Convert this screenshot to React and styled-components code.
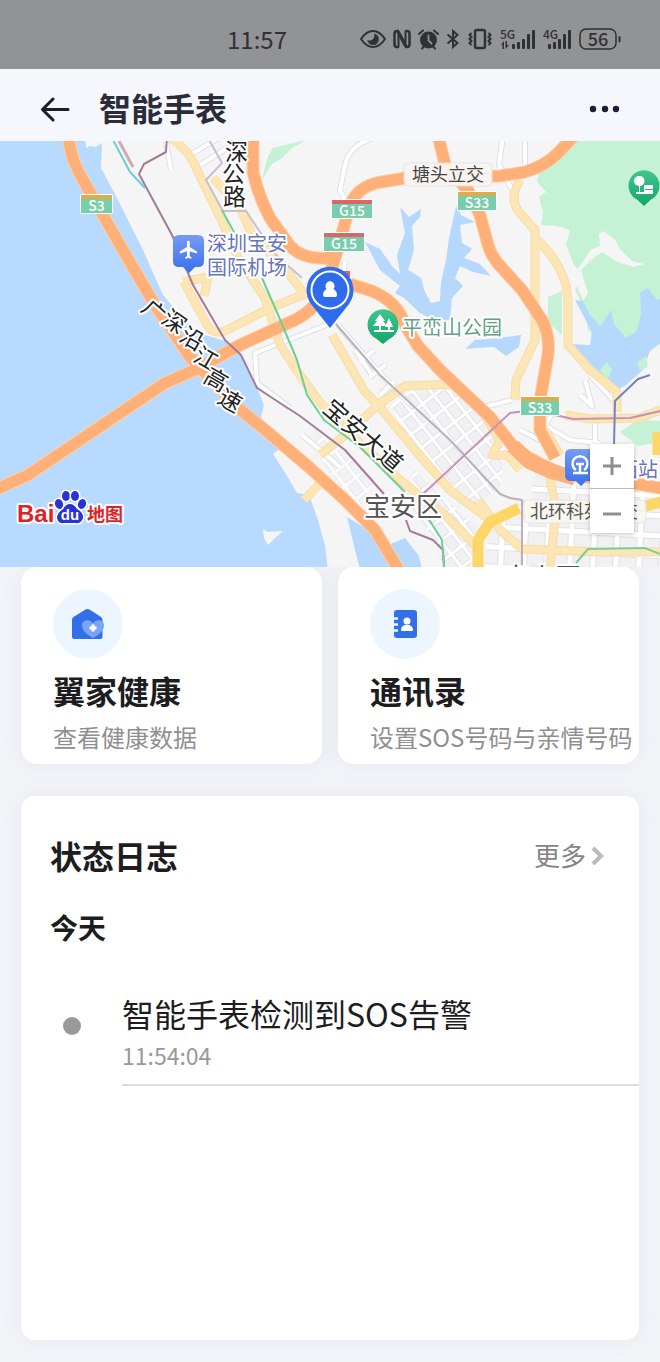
import React, { useState } from "react";
import styled, { createGlobalStyle } from "styled-components";

const GlobalStyle = createGlobalStyle`
  * {
    box-sizing: border-box;
  }

  body {
    margin: 0;
    background-color: #f2f4f8;
    font-family: "Noto Sans CJK SC", sans-serif;
    color: #1d1d1f;
  }
`;

const Page = styled.div`
  display: flex;
  flex-direction: column;
  min-height: 100vh;
  padding-bottom: 22px;
`;

const StatusBar = styled.div`
  display: flex;
  align-items: center;
  justify-content: flex-end;
  height: 69px;
  padding: 9px 39px 0 0;
  background-color: #929395;
  color: #303134;
`;

const Clock = styled.span`
  margin-right: 73px;
  font-size: 24px;
  line-height: 32px;
`;

const StatusIcons = styled.div`
  display: flex;
  align-items: center;
  gap: 7px;

  svg {
    display: block;
    overflow: visible;
  }
`;

const Header = styled.header`
  display: flex;
  align-items: center;
  height: 72px;
  padding: 7px 38px 0 40px;
  background-color: #f5f7fc;
`;

const IconButton = styled.button`
  display: flex;
  padding: 0;
  border: none;
  background: none;
  cursor: pointer;
`;

const Title = styled.h1`
  flex: 1;
  margin: 0 0 0 29px;
  padding-bottom: 4px;
  font-size: 32px;
  line-height: 48px;
  font-weight: 700;
  color: #2b2c3a;
`;

const MapBox = styled.section`
  position: relative;
  height: 426px;
  overflow: hidden;
  background-color: #f5f5f5;
`;

const MapSvg = styled.svg`
  display: block;
  width: 100%;
  height: 100%;
`;

const MapText = styled.text`
  font-size: ${(props) => props.$size || 20}px;
  font-weight: ${(props) => props.$weight || 400};
  fill: ${(props) => props.$color || "#222"};
  stroke: #fff;
  stroke-width: ${(props) => (props.$plain ? 0 : 4)}px;
  stroke-linejoin: round;
  paint-order: stroke;
`;

const ZoomControl = styled.div`
  position: absolute;
  right: 26px;
  bottom: 34px;
  display: flex;
  flex-direction: column;
  background-color: #fff;
  box-shadow: 0 1px 4px rgba(0, 0, 0, 0.25);
`;

const ZoomButton = styled(IconButton)`
  align-items: center;
  justify-content: center;
  width: 44px;
  height: 44px;

  & + & {
    height: 45px;
    border-top: 1px solid #bbb;
  }
`;

const Cards = styled.div`
  display: grid;
  grid-template-columns: 1fr 1fr;
  gap: 16px;
  padding: 0 21px;
  margin-bottom: 32px;
`;

const Card = styled.a`
  display: block;
  padding: 22px 4px 10px 32px;
  border-radius: 16px;
  background-color: #fff;
  box-shadow: 0 0 24px rgba(90, 95, 120, 0.08);
  color: inherit;
  text-decoration: none;
`;

const CardIcon = styled.div`
  display: flex;
  align-items: center;
  justify-content: center;
  width: 70px;
  height: 70px;
  border-radius: 50%;
  background-color: #edf6ff;
`;

const CardTitle = styled.h2`
  margin: 8px 0 6px;
  font-size: 32px;
  line-height: 46px;
  font-weight: 700;
`;

const CardText = styled.p`
  margin: 0;
  font-size: 24px;
  line-height: 35px;
  color: #8f8f8f;
  white-space: nowrap;
`;

const LogPanel = styled.section`
  flex: 1;
  margin: 0 21px;
  padding-top: 35px;
  border-radius: 14px;
  background-color: #fff;
  box-shadow: 0 0 24px rgba(90, 95, 120, 0.08);
`;

const LogHead = styled.div`
  display: flex;
  align-items: center;
  justify-content: space-between;
  padding: 0 34px 0 29px;
`;

const LogTitle = styled.h2`
  margin: 0;
  font-size: 32px;
  line-height: 48px;
  font-weight: 700;
`;

const MoreLink = styled.a`
  display: flex;
  align-items: center;
  gap: 5px;
  font-size: 26px;
  line-height: 40px;
  color: #858585;
  text-decoration: none;
`;

const DayTitle = styled.h3`
  margin: 28px 0 42px 29px;
  font-size: 28px;
  line-height: 40px;
  font-weight: 700;
`;

const LogList = styled.ul`
  margin: 0;
  padding: 0 0 0 42px;
  list-style: none;
`;

const LogItem = styled.li`
  display: flex;
  gap: 41px;
`;

const Dot = styled.span`
  flex: none;
  width: 18px;
  height: 18px;
  margin-top: 28px;
  border-radius: 50%;
  background-color: #999;
`;

const LogBody = styled.div`
  flex: 1;
  padding-bottom: 11px;
  border-bottom: 2px solid #dcdcdc;
`;

const LogText = styled.p`
  margin: 0;
  font-size: 32px;
  line-height: 48px;
`;

const LogTime = styled.time`
  display: block;
  font-size: 23px;
  line-height: 36px;
  color: #999;
`;

const EyeIcon = () => (
  <svg width="26" height="20" viewBox="0 0 26 20" fill="none" stroke="currentColor" strokeWidth="2">
    <path d="M1 10C5 4 9 2 13 2s8 2 12 8c-4 6-8 8-12 8S5 16 1 10Z" />
    <path d="M14 4.500a5.800 5.800 0 1 1-6.700 6.500c2.200 1 4.200.5 5.700-1s1.700-3.500 1-5.500Z" fill="currentColor" stroke="none" />
  </svg>
);

const NfcIcon = () => (
  <svg width="18" height="20" viewBox="0 0 18 20" fill="none" stroke="currentColor" strokeLinecap="round">
    <path d="M5 2H4Q1.500 2 1.500 4.500v11Q1.500 18 4 18h1M13 2h1q2.500 0 2.500 2.500v11Q16.500 18 14 18h-1" strokeWidth="2.500" />
    <path d="M5.500 17V6M12.500 3v11" strokeWidth="2" />
    <path d="M5.500 3.500L12.500 16.500" strokeWidth="3.500" />
  </svg>
);

const AlarmIcon = () => (
  <svg width="21" height="21" viewBox="0 0 21 21" fill="none" stroke="currentColor" strokeWidth="2" strokeLinecap="round">
    <circle cx="10.500" cy="11" r="7.500" fill="currentColor" />
    <path d="M1 5l4-3.500M20 5l-4-3.500M4 19.500l2-2M17 19.500l-2-2" />
    <path d="M10.500 6.500v5l3 3" stroke="#929395" strokeWidth="1.800" />
  </svg>
);

const BluetoothIcon = () => (
  <svg width="14" height="20" viewBox="0 0 14 20" fill="none" stroke="currentColor" strokeWidth="2">
    <path d="M1.500 5.500L11.500 14 7 18V2l4.500 4L1.500 14.500" />
  </svg>
);

const VibrateIcon = () => (
  <svg width="26" height="20" viewBox="0 0 26 20" fill="none" stroke="currentColor" strokeWidth="2">
    <rect x="8" y="1" width="10" height="18" rx="2" strokeWidth="2.500" />
    <path d="M4.500 4l-2 2 2 2-2 2 2 2-2 2 2 2M21.500 4l2 2-2 2 2 2-2 2 2 2-2 2" />
  </svg>
);

const SignalIcon = ({ label, arrows }) => {
  const start = arrows ? 12 : 5;
  return (
    <svg width={arrows ? 36 : 29} height="22" viewBox={`0 0 ${arrows ? 36 : 29} 22`} fill="currentColor">
      <text x="0" y="11" fontSize="12" fontWeight="500">{label}</text>
      {[5, 7, 10, 15, 19].map((h, i) => (
        <rect key={h} x={start + i * 5} y={21 - h} width="3" height={h} rx="1" />
      ))}
      {arrows && <path d="M1 17l3-4v8H2.500v-4zM5.500 13H7v4h2l-3.500 4z" />}
    </svg>
  );
};

const BatteryIcon = () => (
  <svg width="42" height="22" viewBox="0 0 42 22" fill="none" stroke="currentColor">
    <rect x="1" y="1" width="36" height="20" rx="6" strokeWidth="1.500" />
    <path d="M40.500 9v4.500" strokeWidth="2" strokeLinecap="round" />
    <text x="19" y="17.500" fontSize="18" fontWeight="500" textAnchor="middle" fill="currentColor" stroke="none">56</text>
  </svg>
);

const HomeHealthIcon = () => (
  <svg width="34" height="32" viewBox="0 0 34 32">
    <path d="M1 12q0-2 1.500-3L14.500 1.500q2-1 4 0L30 9q1.500 1 1.500 3v17q0 2-2 2H3q-2 0-2-2Z" fill="#3370e8" />
    <path d="M22 30c-7-4-11-8-11-12.500 0-6 8-7 11-2 3-5 11-4 11 2C33 22 29 26 22 30Z" fill="#78a4f6" />
    <path d="M22 16.500v7M18.500 20h7" stroke="#fff" strokeWidth="3" />
  </svg>
);

const ContactsIcon = () => (
  <svg width="26" height="30" viewBox="0 0 26 30">
    <rect x="2" y="1" width="23" height="28" rx="3" fill="#3370e8" />
    <path d="M0 9.500h6M0 15.500h6M0 21.500h6" stroke="#edf6ff" strokeWidth="2.500" />
    <circle cx="15" cy="12" r="3.500" fill="#fff" />
    <path d="M9 21c0-7 12-7 12 0q0 1-1 1H10q-1 0-1-1Z" fill="#fff" />
  </svg>
);

const shields = [
  { x: 81, y: 195, name: "S3", w: 31, top: "#dcae49" },
  { x: 332, y: 200, name: "G15", w: 40, top: "#d9666a" },
  { x: 324, y: 233, name: "G15", w: 40, top: "#d9666a" },
  { x: 458, y: 192, name: "S33", w: 38, top: "#dcae49" },
  { x: 521, y: 397, name: "S33", w: 38, top: "#dcae49" },
];

const highways = [
  "M68 136Q71 160 83 180L120 245 155 305 190 357 237 407 270 434 310 468 345 500 375 530 400 572",
  "M-5 490L28 475 165 383 195 370 240 345 295 320Q318 308 326 286L336 255 350 205Q357 188 376 183L405 178 500 176 525 172Q545 166 558 153L575 135",
  "M253 136V172Q258 195 270 218L290 246Q305 262 335 257M350 284L372 291Q398 302 405 325L418 346 440 370 490 417 516 450Q540 465 565 475L610 479 665 489",
  "M438 136L446 168 468 190 480 215 488 245Q492 258 502 268L522 290 542 320Q550 335 548 355L540 400V430L555 458",
];

const mainRoads = [
  "M168 136Q190 150 198 172L220 217 238 258 265 298 280 345 300 375 318 400 347 431 400 480 445 515 480 550",
  "M213 178L240 207 252 235 282 265 306 296",
  "M183 282L208 277 204 296M184 282L207 325Q213 335 225 331L270 308 315 290",
  "M332 335L365 392 378 405 415 450 450 490 490 520",
  "M378 405L345 435 320 455M378 405L405 386 455 384",
  "M520 180Q508 200 520 213L535 230V340L516 380 515 400M535 238Q558 258 566 285L568 300V345L590 370 617 392V412",
  "M565 415L590 419 640 418 665 408",
  "M480 408L500 440 492 455 508 455 520 470M545 430L560 455M478 500L500 530 522 549 600 552 665 552",
  "M550 478L556 510 550 567M304 500L325 478",
];

const whiteRoads = [
  "M165 136L171 170M190 155L222 136M200 165L235 143M243 136L248 155",
  "M503 136L499 165 515 195M525 136V165M382 136Q350 142 345 165L340 190 345 200M345 262L340 290",
  "M329 324L255 353 257 383 290 408M302 435L320 450 340 467",
  "M338 325L375 368 410 404M355 350L372 375M370 377L385 365M360 362L374 350M380 395L394 382",
  "M585 380L592 406 580 395M590 375L615 402M556 408L545 425 570 440 600 443M595 420V450M480 408L512 400M520 430L550 445",
];

const lakes = [
  "M365 242L380 249 392 266 400 274 397 255 405 233 400 207 409 217 421 209 420 217 412 226 414 250 408 270 421 278 425 292 431 303 440 301 441 282 446 260 449 238 453 220 456 206 461 215 475 222 460 225 462 243 472 249 464 258 480 264 491 276 473 272 460 266 455 278 463 286 452 298 450 320 440 323 420 313 404 298 395 293 400 286 380 270Z",
  "M465 349L475 340 500 338 521 335 519 347 506 356 494 347 477 348Z",
  "M575 300L583 301 590 315 600 326 611 310 614 324 626 338 636 332 641 315 640 292 648 288 657 300 665 296V340L650 350 644 369 625 386 615 390 607 382 597 370 580 355 569 344 590 345 592 332Z",
  "M347 517L372 532 388 545 405 538 419 556 422 570H360Z",
];

const parks = [
  "M573 136L560 152 540 166 537 182 546 192 539 197 543 212 541 225 557 226 570 230 566 245 574 265 583 275 575 290 585 310 588 330 610 350 640 360 665 340V136Z",
  "M548 297L562 291V335L548 323Z",
  "M262 179L268 156 273 148 306 140 292 148 282 158 272 164Z",
  "M620 432L637 420 665 421V441L638 446Z",
];

const Shield = ({ x, y, name, w, top }) => (
  <g>
    <rect x={x - 1} y={y - 1} width={w + 2} height="20" rx="2" fill="#fff" />
    <path d={`M${x} ${y}h${w}v18h-${w}z`} fill="#78cdac" />
    <path d={`M${x} ${y}h${w}v4h-${w}z`} fill={top} />
    <MapText x={x + w / 2} y={y + 16} textAnchor="middle" $size={14} $weight={500} $color="#fff" $plain>
      {name}
    </MapText>
  </g>
);

const MapView = () => (
  <MapSvg viewBox="0 141 660 426" preserveAspectRatio="xMidYMid slice" role="img" aria-label="地图">
    <defs>
      <pattern id="blocks" width="14" height="17" patternUnits="userSpaceOnUse" patternTransform="rotate(-38)">
        <rect width="14" height="17" fill="#fff" />
        <rect x="2" y="2" width="11" height="14" fill="#e2e3e8" />
        <rect x="3" y="3" width="9" height="12" fill="#f1f1f4" />
      </pattern>
      <pattern id="blocksStraight" width="23" height="20" patternUnits="userSpaceOnUse" patternTransform="rotate(3)">
        <rect width="23" height="20" fill="#fff" />
        <rect x="3" y="3" width="18" height="15" fill="#e0e1e6" />
        <rect x="4" y="4" width="16" height="13" fill="#f1f1f4" />
      </pattern>
      <linearGradient id="bluePin" x1="0" y1="0" x2="0" y2="1">
        <stop offset="0" stopColor="#779bf5" />
        <stop offset="1" stopColor="#396eed" />
      </linearGradient>
      <linearGradient id="greenPin" x1="0" y1="0" x2="0" y2="1">
        <stop offset="0" stopColor="#40c68d" />
        <stop offset="1" stopColor="#13a66b" />
      </linearGradient>
    </defs>

    <rect y="141" width="660" height="426" fill="#f5f5f6" />
    <path
      d="M-5 136H85L86 148 90 146 96 147 102 143 101 168 118 200 143 250 163 295 183 319 202 334 225 341 241 355 257 388 264 405 261 417 281 448 273 454 286 474 297 493 309 495 317 517 325 545 328 572H-5Z"
      fill="#b9daff"
    />
    <path d="M263 529L267 532 283 531 276 537 268 545 264 538Z" fill="#f5f5f6" />
    {parks.map((d) => <path key={d} d={d} fill="#c5f1d5" />)}
    <path d="M575 281L577 270 591 250 600 246 599 234 604 231 615 240 620 249 632 261 644 264 634 267 618 262 602 252 591 260 581 270 588 293 583 301Z" fill="#f5f5f6" />
    {lakes.map((d) => <path key={d} d={d} fill="#b6d8fd" />)}
    <path d="M600 370L607 362 612 370 607 381ZM637 362L646 356 648 367 640 370Z" fill="#c5f1d5" />

    <path d="M390 405L415 388 448 390 476 408 488 425 504 450 500 490 470 505 440 480 410 440Z" fill="url(#blocks)" />
    <path d="M415 470L440 495 480 530 470 567 443 567 432 535 405 500Z" fill="url(#blocks)" />
    <path d="M305 437L318 428 350 457 375 480 360 510 335 480Z" fill="url(#blocks)" opacity="0.7" />
    <path d="M490 520L520 500 660 500V567H485Z" fill="url(#blocksStraight)" />
    <path d="M535 465L590 475 620 480 660 490V505H530Z" fill="url(#blocksStraight)" />

    <g fill="none" strokeLinejoin="round">
      {whiteRoads.map((d) => <path key={d} d={d} stroke="#dfe0e5" strokeWidth="6" />)}
      {whiteRoads.map((d) => <path key={d} d={d} stroke="#fff" strokeWidth="4" />)}
      {mainRoads.map((d) => <path key={d} d={d} stroke="#f8dca5" strokeWidth="9" />)}
      {mainRoads.map((d) => <path key={d} d={d} stroke="#fde6b6" strokeWidth="7" />)}
      <path d="M478 567V540L490 522 519 508M638 508L665 501M658 432V455" stroke="#fcd768" strokeWidth="11" />
      {highways.map((d) => <path key={d} d={d} stroke="#fdcfa6" strokeWidth="13" />)}
      {highways.map((d) => <path key={d} d={d} stroke="#feb078" strokeWidth="11" />)}
      <path d="M513 446L530 462 550 471 575 478" stroke="#feb078" strokeWidth="15" />

      <path d="M167 136L166 152 144 164 139 174 172 235 193 285 225 340 241 355 257 388 300 416 345 450 384 494M406 520L410 531 433 540 443 550 444 567" stroke="#a37d98" strokeWidth="2" />
      <path d="M111 136L130 172 145 188" stroke="#69cfd4" strokeWidth="2" />
      <path d="M119 141L133 167" stroke="#d5a9ad" strokeWidth="3" />
      <path d="M207 136L222 163 206 180 223 211 246 211 262 235 276 255 302 278" stroke="#c9bfd1" strokeWidth="2" />
      <path d="M222 210L236 236M262 278L276 310 297 360 307 395 324 420 360 447 405 492M428 518L442 540 444 567" stroke="#70ce94" strokeWidth="2" />
      <path d="M336 324L380 375 450 440 500 494 510 498 522 500V567" stroke="#b8b0bd" strokeWidth="2" />
      <path d="M423 494L510 413 525 411 555 415 573 419 630 418 665 410" stroke="#c891b7" strokeWidth="2" />
      <path d="M650 375L638 379 615 401 614 445" stroke="#7681c3" strokeWidth="2" />
      <path d="M576 563L588 549 645 548 665 556" stroke="#7ccc9a" strokeWidth="2" />
    </g>

    {shields.map((s) => <Shield key={`${s.x}-${s.y}`} {...s} />)}
    <rect x="340" y="271" width="10" height="6" fill="#d9666a" />

    <rect x="404" y="163" width="88" height="23" rx="4" fill="#faf6f4" opacity="0.95" stroke="#e6e1df" />
    <MapText x="412" y="181" $size={18} $color="#444" $plain>塘头立交</MapText>
    <rect x="524" y="500" width="122" height="23" rx="4" fill="#f8f7f1" opacity="0.95" stroke="#e6e4dc" />
    <MapText x="530" y="518" $size={18} $color="#555" $plain>北环科苑立交</MapText>

    <MapText x="225 222 223" y="160 182 205" $size={23}>深公路</MapText>
    <MapText x="140 160 178 192 202 216" y="310 322 340 360 381 402" rotate="42 35 30 30 30 30" $size={23}>广深沿江高速</MapText>
    <MapText transform="translate(363 436) rotate(41)" y="8" textAnchor="middle" $size={24}>宝安大道</MapText>
    <MapText $color="#6673bd">
      <tspan x="207" y="251">深圳宝安</tspan>
      <tspan x="207" y="275">国际机场</tspan>
    </MapText>
    <MapText x="402" y="335" $color="#62a184">平峦山公园</MapText>
    <MapText x="364" y="516" $size={26} $color="#555">宝安区</MapText>
    <MapText x="503" y="587" $size={26} $color="#555">南山区</MapText>
    <MapText x="618" y="477" $color="#6673bd">西站</MapText>

    {/* airport */}
    <path d="M179 235h19q6 0 6 6v20q0 6-6 6h-3l-6 6-6-6h-4q-6 0-6-6v-20q0-6 6-6Z" fill="url(#bluePin)" />
    <path transform="translate(178 239) scale(0.9)" d="M21 16v-2l-8-5V3.500c0-.83-.67-1.500-1.500-1.500S10 2.670 10 3.500V9l-8 5v2l8-2.500V19l-2 1.500V22l3.500-1 3.500 1v-1.500L13 19v-5.500l8 2.500z" fill="#fff" />

    {/* railway station */}
    <path d="M571 449h20q6 0 6 6v20q0 6-6 6h-5l-5 5-5-5h-5q-6 0-6-6v-20q0-6 6-6Z" fill="url(#bluePin)" />
    <path d="M576 470a7.500 7.500 0 1 1 8 0M580 457v-2M573 473h15M576 464h8M580 464v9" fill="none" stroke="#fff" strokeWidth="2.500" />

    {/* parks */}
    <path d="M376 338.500a15.500 15.500 0 1 1 14 0L383 344Z" fill="url(#greenPin)" />
    <path d="M380 314l5 7h-2l4 5h-6v4h7v-3h-3l4-9 4 9h-3v3h4v2h-20v-2h5v-4h-6l4-5h-2Z" fill="#fff" />
    <path d="M637 199.500a15.500 15.500 0 1 1 14 0L644 206Z" fill="url(#greenPin)" />
    <path d="M639 176a5 5 0 0 1 1 10v6h4v-7h9v4h-8v1h8v4h-17v-2h3v-6a5 5 0 0 1 0-10Z" fill="#fff" />

    {/* watch position */}
    <path d="M330 328L311 304A23.500 23.500 0 1 1 349 304Z" fill="#2f6bed" />
    <circle cx="330" cy="290" r="18.500" fill="none" stroke="#fff" strokeWidth="2" />
    <path d="M330 281a5 5 0 0 1 3.500 8q3.500 2 3.500 6 0 2-2 2h-10q-2 0-2-2 0-4 3.500-6a5 5 0 0 1 3.500-8Z" fill="#fff" />

    {/* Baidu logo */}
    <g stroke="#fff" strokeWidth="3" fill="#2932d8" paintOrder="stroke">
      <path d="M70 504q4 0 7 5 7 4 6 9-2 6-7 5h-12q-6 1-7-5 0-5 6-9 3-5 7-5Z" />
      <ellipse cx="59" cy="504" rx="4" ry="5" transform="rotate(-20 59 504)" />
      <ellipse cx="66" cy="496" rx="4" ry="5" />
      <ellipse cx="75" cy="496" rx="4" ry="5" />
      <ellipse cx="82" cy="504" rx="4" ry="5" transform="rotate(20 82 504)" />
    </g>
    <MapText x="17" y="522" $size={24} $weight={700} $color="#dc2328" fontFamily="Liberation Sans, sans-serif">Bai</MapText>
    <MapText x="70" y="520" textAnchor="middle" $size={15} $weight={700} $color="#fff" $plain fontFamily="Liberation Sans, sans-serif">du</MapText>
    <MapText x="87" y="521" $size={18} $weight={700} $color="#dc2328">地图</MapText>
  </MapSvg>
);

const entries = [
  { icon: <HomeHealthIcon />, title: "翼家健康", text: "查看健康数据", href: "#health" },
  { icon: <ContactsIcon />, title: "通讯录", text: "设置SOS号码与亲情号码", href: "#contacts" },
];

const App = () => {
  const [logs] = useState([{ time: "11:54:04", text: "智能手表检测到SOS告警" }]);

  return (
    <Page>
      <GlobalStyle />
      <StatusBar>
        <Clock>11:57</Clock>
        <StatusIcons>
          <EyeIcon />
          <NfcIcon />
          <AlarmIcon />
          <BluetoothIcon />
          <VibrateIcon />
          <SignalIcon label="5G" arrows />
          <SignalIcon label="4G" />
          <BatteryIcon />
        </StatusIcons>
      </StatusBar>
      <Header>
        <IconButton aria-label="返回">
          <svg width="30" height="26" viewBox="0 0 30 26" fill="none" stroke="#1d1d26" strokeWidth="3" strokeLinecap="round" strokeLinejoin="round">
            <path d="M28 13.500H3M13 3L2.500 13.500 13 24" />
          </svg>
        </IconButton>
        <Title>智能手表</Title>
        <IconButton aria-label="更多">
          <svg width="34" height="8" viewBox="0 0 34 8" fill="#1c1d35">
            <circle cx="5" cy="4" r="3.200" />
            <circle cx="17" cy="4" r="3.200" />
            <circle cx="28" cy="4" r="3.200" />
          </svg>
        </IconButton>
      </Header>
      <MapBox>
        <MapView />
        <ZoomControl>
          <ZoomButton aria-label="放大">
            <svg width="18" height="18" stroke="#8f8f8f" strokeWidth="3">
              <path d="M0 9h18M9 0v18" />
            </svg>
          </ZoomButton>
          <ZoomButton aria-label="缩小">
            <svg width="18" height="18" stroke="#8f8f8f" strokeWidth="3">
              <path d="M0 12h18" />
            </svg>
          </ZoomButton>
        </ZoomControl>
      </MapBox>
      <Cards>
        {entries.map((entry) => (
          <Card key={entry.title} href={entry.href}>
            <CardIcon>{entry.icon}</CardIcon>
            <CardTitle>{entry.title}</CardTitle>
            <CardText>{entry.text}</CardText>
          </Card>
        ))}
      </Cards>
      <LogPanel>
        <LogHead>
          <LogTitle>状态日志</LogTitle>
          <MoreLink href="#logs">
            更多
            <svg width="14" height="20" viewBox="0 0 14 20" fill="none" stroke="#bbb" strokeWidth="4">
              <path d="M2 3l8 8-8 8" />
            </svg>
          </MoreLink>
        </LogHead>
        <DayTitle>今天</DayTitle>
        <LogList>
          {logs.map((log) => (
            <LogItem key={log.time}>
              <Dot />
              <LogBody>
                <LogText>{log.text}</LogText>
                <LogTime>{log.time}</LogTime>
              </LogBody>
            </LogItem>
          ))}
        </LogList>
      </LogPanel>
    </Page>
  );
};

export default App;
